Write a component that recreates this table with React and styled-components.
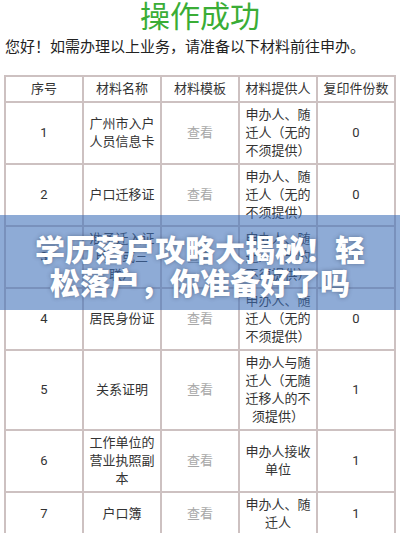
import styled, { createGlobalStyle } from "styled-components"

const GlobalStyle = createGlobalStyle`
body{
  margin:0;
  background:#ffffff;
  font-family: Roboto, "Noto Sans CJK SC", sans-serif;
}
`

const rows = [
  { no: "1", name: "广州市入户人员信息卡", who: "申办人、随迁人（无的不须提供）", copies: "0" },
  { no: "2", name: "户口迁移证", who: "申办人、随迁人（无的不须提供）", copies: "0" },
  { no: "3", name: "准予迁入证明（或三联）", who: "申办人、随迁人（无的不须提供）", copies: "0" },
  { no: "4", name: "居民身份证", who: "申办人、随迁人（无的不须提供）", copies: "0" },
  { no: "5", name: "关系证明", who: "申办人与随迁人（无随迁移人的不须提供）", copies: "1" },
  { no: "6", name: "工作单位的营业执照副本", who: "申办人接收单位", copies: "1" },
  { no: "7", name: "户口簿", who: "申办人、随迁人", copies: "1" },
]

export default function App(){
  return(<>
    <GlobalStyle/>
    <Page>
      <Title>操作成功</Title>
      <Greeting>您好！如需办理以上业务，请准备以下材料前往申办。</Greeting>
      <Table>
        <thead>
          <tr>
            <HeadCell>序号</HeadCell>
            <HeadCell>材料名称</HeadCell>
            <HeadCell>材料模板</HeadCell>
            <HeadCell>材料提供人</HeadCell>
            <HeadCell>复印件份数</HeadCell>
          </tr>
        </thead>
        <tbody>
          {rows.map(r => (
            <tr key={r.no}>
              <Cell>{r.no}</Cell>
              <Cell>{r.name}</Cell>
              <Cell $muted>查看</Cell>
              <Cell>{r.who}</Cell>
              <Cell>{r.copies}</Cell>
            </tr>
          ))}
        </tbody>
      </Table>
      <Banner>
        <BannerText>学历落户攻略大揭秘！轻松落户，你准备好了吗</BannerText>
      </Banner>
    </Page>
  </>)
}

const Page = styled.div`
position:relative;
height:533px;
overflow:hidden;
padding:1px 4px 0;
`
const Title = styled.h1`
margin:0;
font-size:30px;
line-height:31px;
font-weight:400;
text-align:center;
color:#3aad36;
`
const Greeting = styled.p`
margin:8px 0 0 1px;
font-size:15px;
line-height:15px;
color:#222;
white-space:nowrap;
`
const Table = styled.table`
margin-top:20px;
width:100%;
table-layout:fixed;
border-collapse:collapse;
font-size:13px;
line-height:18px;
color:#333;
`
const HeadCell = styled.th`
font-weight:400;
padding:3px 4px;
border:2px solid #cdc1c1;
text-align:center;
color:#333;
`
const Cell = styled.td`
padding:3px 4px;
border:2px solid #cdc1c1;
text-align:center;
vertical-align:middle;
color:${p => p.$muted ? "#a8a8a8" : "#333"};
`
const Banner = styled.div`
position:absolute;
left:0;
right:0;
top:215px;
height:95px;
background:rgba(60,110,185,0.58);
display:flex;
justify-content:center;
align-items:center;
padding-top:8px;
box-sizing:border-box;
`
const BannerText = styled.div`
width:334px;
text-align:center;
font-size:30px;
line-height:33px;
font-weight:900;
color:#ffffff;
text-shadow:0 0 4px rgba(40,50,70,0.45);
`
